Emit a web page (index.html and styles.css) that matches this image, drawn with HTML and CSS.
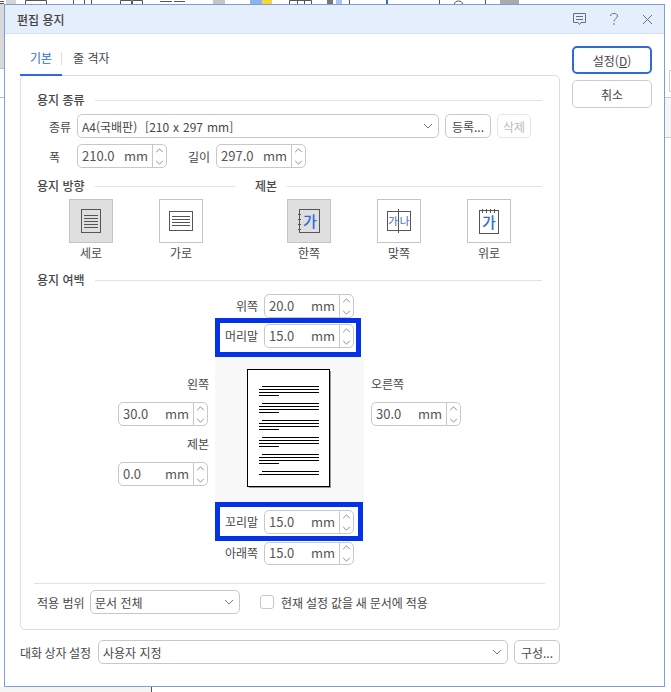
FILE: index.html
```html
<!DOCTYPE html>
<html lang="ko">
<head>
	<meta charset="utf-8"/>
	<title>편집 용지</title>
	<link rel="stylesheet" href="styles.css">
</head>
<body>
<div id="desktop">
	<svg class="backdrop" width="671" height="692" viewBox="0 0 671 692">
		<rect x="0" y="0" width="671" height="692" fill="#fff"/>
		<rect x="0" y="687" width="151" height="5" fill="#f5f5f5"/>
		<rect x="6" y="0" width="10" height="4" fill="#d4d4d4"/>
		<path d="M0 1.500H4M0 3.500H4" stroke="#555"/>
		<g fill="none" stroke="#555">
			<path d="M25.500 4V0.500H46.500V4"/>
			<path d="M73.500 4V0M84.500 4V0M91.500 4V0"/>
			<path d="M120.500 4V0.500H131.500V4M132.500 4V0.500H142.500V4"/>
			<path d="M160 1.500H172M174 1.500H185"/>
			<path d="M289.500 4V0.500H311.500V4M297.500 4V0M304.500 4V0"/>
			<path d="M349.500 4V0M439.500 4V0M485.500 4V0"/>
			<path d="M454.500 4C454.500 0 462.500 0 462.500 4"/>
		</g>
		<rect x="213" y="0" width="12" height="4" fill="#c5c5c5"/>
		<rect x="250" y="0" width="12" height="4" fill="#8db4ea"/>
		<rect x="262" y="0" width="10" height="4" fill="#f2d840"/>
		<rect x="327" y="0" width="6" height="4" fill="#777"/>
		<rect x="336" y="0" width="6" height="4" fill="#a9c4ee"/>
		<rect x="386" y="0" width="2" height="4" fill="#2f6bd8"/>
		<rect x="500" y="0" width="19" height="4" fill="#aaa"/>
		<rect x="0" y="4" width="4" height="64" fill="#d9d9d9"/>
		<path d="M0 68.500H4M0 97.500H4" stroke="#bbb"/>
		<path d="M151.500 687V692" stroke="#555"/>
		<rect x="665" y="97" width="6" height="40" fill="#f6f6f6"/>
		<path d="M665 97.500H671M665 137.500H671" stroke="#ccc"/>
		<path d="M671 70.500H669.500V91.500H671" fill="none" stroke="#ccc"/>
	</svg>

	<div class="dialog">
		<div class="titlebar">
			<span class="title">편집 용지</span>
			<div class="title-icons">
				<svg width="13" height="12" viewBox="0 0 13 12"><path d="M0.500 0.500H12.500V9.500H8L6.500 11.500L5 9.500H0.500Z M3 3.500H10M3 6.500H10" fill="none" stroke="#66707c"/></svg>
				<svg class="icon-help" width="8" height="12" viewBox="0 0 8 12"><path d="M0.500 3C0.500 -0.500 7.500 -0.500 7.500 3C7.500 5.500 4 5.500 4 8.500M4 10V12" fill="none" stroke="#66707c"/></svg>
				<svg width="9" height="9" viewBox="0 0 9 9"><path d="M0 0L9 9M9 0L0 9" fill="none" stroke="#66707c"/></svg>
			</div>
		</div>

		<div class="dialog-main">
			<div class="main-left">
				<div class="tabs">
					<span class="tab tab-on">기본</span>
					<span class="tab">줄 격자</span>
				</div>
				<div class="panel">
					<div class="head"><span>용지 종류</span><i></i></div>
					<div class="row row-kind">
						<label class="lbl-kind">종류</label>
						<div class="select select-kind"><span>A4(국배판)&nbsp; [210 x 297 mm]</span><svg class="chev" width="10" height="6" viewBox="0 0 10 6"><path d="M1 1L5 5L9 1"/></svg></div>
						<span class="btn btn-reg">등록...</span>
						<span class="btn btn-del">삭제</span>
					</div>
					<div class="row row-size">
						<label class="lbl-kind">폭</label>
						<div class="spin"><b>210.0</b><em>mm</em><div class="arrows"><svg viewBox="0 0 10 6"><path d="M1 5L5 1L9 5"/></svg><svg viewBox="0 0 10 6"><path d="M1 1L5 5L9 1"/></svg></div></div>
						<label class="lbl-len">길이</label>
						<div class="spin"><b>297.0</b><em>mm</em><div class="arrows"><svg viewBox="0 0 10 6"><path d="M1 5L5 1L9 5"/></svg><svg viewBox="0 0 10 6"><path d="M1 1L5 5L9 1"/></svg></div></div>
					</div>

					<div class="head-pair">
						<div class="head head-dir"><span>용지 방향</span><i></i></div>
						<div class="head head-bind"><span>제본</span><i></i></div>
					</div>
					<div class="tiles">
						<div class="tile tile-on">
							<div class="box"><svg width="20" height="24" viewBox="0 0 20 24"><rect x="0.500" y="0.500" width="19" height="23" fill="none" stroke="#555"/><path d="M3 6.500H17M3 9.500H17M3 12.500H17M3 15.500H17M3 18.500H17" stroke="#555"/></svg></div>
							<span>세로</span>
						</div>
						<div class="tile tile-2">
							<div class="box"><svg width="24" height="20" viewBox="0 0 24 20"><rect x="0.500" y="0.500" width="23" height="19" fill="none" stroke="#555"/><path d="M3 5.500H21M3 8.500H21M3 11.500H21M3 14.500H21" stroke="#555"/></svg></div>
							<span>가로</span>
						</div>
						<div class="tile tile-3 tile-on">
							<div class="box"><svg width="22" height="24" viewBox="0 0 22 24"><rect x="1.500" y="0.500" width="20" height="23" fill="none" stroke="#555"/><path d="M0 5.500H3M0 10.500H3M0 15.500H3M0 20.500H3" stroke="#555"/><text x="12" y="18" text-anchor="middle" class="ga">가</text></svg></div>
							<span>한쪽</span>
						</div>
						<div class="tile tile-4">
							<div class="box"><svg width="24" height="24" viewBox="0 0 24 24"><rect x="0.500" y="2.500" width="23" height="19" fill="#fff" stroke="#555"/><path d="M11.500 0V24" stroke="#555"/><text x="6" y="16" text-anchor="middle" class="ga-small">가</text><text x="17.500" y="16" text-anchor="middle" class="ga-small">나</text></svg></div>
							<span>맞쪽</span>
						</div>
						<div class="tile tile-4">
							<div class="box"><svg width="20" height="25" viewBox="0 0 20 25"><rect x="0.500" y="1.500" width="19" height="23" fill="#fff" stroke="#555"/><path d="M3.500 0V4M7.500 0V4M11.500 0V4M15.500 0V4" stroke="#555"/><text x="10" y="19" text-anchor="middle" class="ga">가</text></svg></div>
							<span>위로</span>
						</div>
					</div>

					<div class="head head-margin"><span>용지 여백</span><i></i></div>
					<div class="margins">
						<div class="side side-left">
							<label>왼쪽</label>
							<div class="spin"><b>30.0</b><em>mm</em><div class="arrows"><svg viewBox="0 0 10 6"><path d="M1 5L5 1L9 5"/></svg><svg viewBox="0 0 10 6"><path d="M1 1L5 5L9 1"/></svg></div></div>
							<label class="lbl-bind">제본</label>
							<div class="spin"><b>0.0</b><em>mm</em><div class="arrows"><svg viewBox="0 0 10 6"><path d="M1 5L5 1L9 5"/></svg><svg viewBox="0 0 10 6"><path d="M1 1L5 5L9 1"/></svg></div></div>
						</div>
						<div class="center">
							<div class="mrow">
								<label>위쪽</label>
								<div class="spin"><b>20.0</b><em>mm</em><div class="arrows"><svg viewBox="0 0 10 6"><path d="M1 5L5 1L9 5"/></svg><svg viewBox="0 0 10 6"><path d="M1 1L5 5L9 1"/></svg></div></div>
							</div>
							<div class="mrow hl hl-top">
								<label>머리말</label>
								<div class="spin"><b>15.0</b><em>mm</em><div class="arrows"><svg viewBox="0 0 10 6"><path d="M1 5L5 1L9 5"/></svg><svg viewBox="0 0 10 6"><path d="M1 1L5 5L9 1"/></svg></div></div>
							</div>
							<div class="preview">
								<svg class="paper" width="84" height="119" viewBox="0 0 84 119">
									<rect x="2" y="2" width="82" height="117" fill="#999"/>
									<rect x="0.500" y="0.500" width="82" height="117" fill="#fff" stroke="#000"/>
									<path d="M15 17.500H72M12 20.500H72M12 23.500H72M12 26.500H32 M15 34.500H72M12 37.500H72M12 40.500H72M12 43.500H32 M15 51.500H72M12 54.500H72M12 57.500H72M12 60.500H32 M15 68.500H72M12 71.500H72M12 74.500H72M12 77.500H32 M15 85.500H72M12 88.500H72M12 91.500H72M12 94.500H32 M15 102.500H72M12 105.500H72" stroke="#000"/>
								</svg>
							</div>
							<div class="mrow hl hl-bottom">
								<label>꼬리말</label>
								<div class="spin"><b>15.0</b><em>mm</em><div class="arrows"><svg viewBox="0 0 10 6"><path d="M1 5L5 1L9 5"/></svg><svg viewBox="0 0 10 6"><path d="M1 1L5 5L9 1"/></svg></div></div>
							</div>
							<div class="mrow">
								<label>아래쪽</label>
								<div class="spin"><b>15.0</b><em>mm</em><div class="arrows"><svg viewBox="0 0 10 6"><path d="M1 5L5 1L9 5"/></svg><svg viewBox="0 0 10 6"><path d="M1 1L5 5L9 1"/></svg></div></div>
							</div>
						</div>
						<div class="side side-right">
							<label>오른쪽</label>
							<div class="spin"><b>30.0</b><em>mm</em><div class="arrows"><svg viewBox="0 0 10 6"><path d="M1 5L5 1L9 5"/></svg><svg viewBox="0 0 10 6"><path d="M1 1L5 5L9 1"/></svg></div></div>
						</div>
					</div>

					<div class="apply">
						<label>적용 범위</label>
						<div class="select select-apply"><span>문서 전체</span><svg class="chev" width="10" height="6" viewBox="0 0 10 6"><path d="M1 1L5 5L9 1"/></svg></div>
						<span class="check"></span>
						<span class="check-text">현재 설정 값을 새 문서에 적용</span>
					</div>
				</div>
				<div class="foot">
					<label>대화 상자 설정</label>
					<div class="select select-foot"><span>사용자 지정</span><svg class="chev" width="10" height="6" viewBox="0 0 10 6"><path d="M1 1L5 5L9 1"/></svg></div>
					<span class="btn btn-make">구성...</span>
				</div>
			</div>
			<div class="main-right">
				<span class="side-btn side-btn-on">설정(<u>D</u>)</span>
				<span class="side-btn">취소</span>
			</div>
		</div>
	</div>
</div>
</body>
</html>
```

FILE: styles.css
```css
*{
	margin:0;
	padding:0;
	box-sizing:border-box;
}
body{
	background:#fff;
	font-family:"Noto Sans CJK KR","Noto Sans",sans-serif;
	font-size:12px;
	color:#484848;
}
#desktop{
	position:relative;
	width:671px;
	height:692px;
	overflow:hidden;
}
.backdrop{
	position:absolute;
	left:0;
	top:0;
}
.dialog{
	position:absolute;
	left:4px;
	top:4px;
	width:661px;
	height:683px;
	background:#fff;
	border:1px solid #7e9fd6;
}
.titlebar{
	display:flex;
	align-items:center;
	justify-content:space-between;
	height:29px;
	padding:0 12px 0 12px;
	background:#e4eefd;
	border-bottom:1px solid #d5e0f2;
}
.title{
	font-weight:500;
	color:#444;
}
.title-icons{
	display:flex;
	gap:24px;
	align-items:center;
}
.icon-help{
	margin-right:1px;
}
.dialog-main{
	display:flex;
	padding:12px 12px 0 15px;
}
.main-left{
	width:540px;
}
.main-right{
	display:flex;
	flex-direction:column;
	gap:6px;
	margin:0 0 0 12px;
}
.side-btn{
	display:flex;
	align-items:center;
	justify-content:center;
	width:80px;
	height:28px;
	border:1px solid #ccc;
	border-radius:5px;
}
.side-btn-on{
	border:2px solid #2f6bd8;
}
.tabs{
	display:flex;
	height:30px;
	align-items:flex-start;
}
.tab{
	position:relative;
	height:30px;
	padding:4px 10px 0 11px;
	line-height:16px;
	white-space:nowrap;
}
.tab-on{
	width:42px;
	padding:4px 0 0 10px;
	color:#2f6bd8;
	border-bottom:2px solid #2f6bd8;
}
.tab-on::after{
	content:"";
	position:absolute;
	right:0;
	top:6px;
	height:13px;
	border-right:1px solid #ddd;
}
.panel{
	height:555px;
	padding:15px 17px 0 16px;
	margin-top:-1px;
	border:1px solid #ddd;
	border-radius:5px;
}
.head{
	display:flex;
	align-items:center;
	gap:10px;
	height:18px;
	line-height:18px;
}
.head span{
	font-weight:500;
	white-space:nowrap;
}
.head i{
	flex:1;
	border-top:1px solid #e2e2e2;
}
.row{
	display:flex;
	align-items:center;
	height:24px;
}
.row-kind{
	margin-top:5px;
}
.row-size{
	margin-top:6px;
}
.lbl-kind{
	width:40px;
	padding-left:12px;
}
.lbl-len{
	width:49px;
	padding-left:21px;
}
.select{
	display:flex;
	align-items:center;
	justify-content:space-between;
	height:24px;
	padding:0 5px 0 4px;
	border:1px solid #c8c8c8;
	border-radius:5px;
}
.select-kind{
	width:362px;
	word-spacing:0.6px;
}
.chev{
	fill:none;
	stroke:#777;
}
.btn{
	display:flex;
	align-items:center;
	justify-content:center;
	height:24px;
	border:1px solid #c8c8c8;
	border-radius:5px;
}
.btn-reg{
	width:46px;
	margin-left:6px;
}
.btn-del{
	width:34px;
	margin-left:6px;
	color:#bbb;
	border-color:#e6e6e6;
}
.spin{
	display:flex;
	align-items:center;
	position:relative;
	width:90px;
	height:24px;
	padding-left:4px;
	border:1px solid #c8c8c8;
	border-radius:5px;
	background:#fff;
	color:#555;
}
.spin b{
	flex:1;
	font-weight:400;
	font-size:13px;
	padding-bottom:1px;
}
.spin em{
	font-style:normal;
	font-size:13px;
	margin-right:4px;
	padding-bottom:1px;
}
.arrows{
	display:flex;
	flex-direction:column;
	align-items:center;
	justify-content:center;
	gap:7px;
	width:14px;
	height:100%;
	border-left:1px solid #c8c8c8;
}
.arrows svg{
	width:9px;
	height:5px;
	fill:none;
	stroke:#777;
}
.head-pair{
	display:flex;
	margin-top:9px;
}
.head-dir{
	width:198px;
	margin-right:20px;
}
.head-bind{
	flex:1;
}
.tiles{
	display:flex;
	margin-top:4px;
}
.tile{
	display:flex;
	flex-direction:column;
	align-items:center;
	width:44px;
	margin-left:46px;
}
.tile:first-child{
	margin-left:32px;
}
.tile-3{
	margin-left:84px;
}
.tile .box{
	display:flex;
	align-items:center;
	justify-content:center;
	width:44px;
	height:44px;
	border:1px solid #c4c4c4;
	background:#fff;
}
.tile-on .box{
	background:#dfdfdf;
}
.tile span{
	margin-top:1px;
	line-height:18px;
}
.ga{
	font-size:15px;
	font-weight:500;
	fill:#2f6bd8;
}
.ga-small{
	font-size:10.500px;
	fill:#2f6bd8;
}
.head-margin{
	margin-top:9px;
}
.margins{
	display:flex;
	height:271px;
	margin-top:5px;
}
.side{
	display:flex;
	flex-direction:column;
}
.side label{
	height:18px;
	line-height:18px;
}
.side-left{
	width:171px;
	padding:81px 0 0 81px;
	align-items:flex-end;
}
.side-left label{
	margin-right:-1px;
}
.side-left .spin{
	margin-top:9px;
}
.side-left .lbl-bind{
	margin-top:9px;
}
.side-right{
	padding:81px 0 0 7px;
}
.side-right .spin{
	margin-top:9px;
}
.center{
	width:149px;
	margin-left:7px;
	display:flex;
	flex-direction:column;
}
.mrow{
	display:flex;
	align-items:center;
	justify-content:flex-end;
	gap:6px;
	flex:none;
	height:24px;
	padding-right:10px;
}
.mrow label{
	line-height:24px;
}
.mrow:last-child .spin{
	height:23px;
}
.hl{
	border:5px solid #0432e6;
	align-items:flex-start;
	background:#fff;
}
.hl-top{
	width:146px;
	height:39px;
	padding:1px 2px 0 0;
}
.hl-bottom{
	width:148px;
	height:39px;
	padding:3px 4px 0 0;
}
.preview{
	display:flex;
	justify-content:center;
	flex:none;
	height:145px;
	padding:12px 1px 0 0;
	background:#f8f8f8;
}
.apply{
	display:flex;
	align-items:center;
	margin:18px -3px 0 -3px;
	padding-top:6px;
	height:31px;
	border-top:1px solid #e2e2e2;
}
.apply label{
	margin-left:3px;
	width:53px;
}
.select-apply{
	width:150px;
}
.check{
	width:14px;
	height:14px;
	margin-left:20px;
	border:1px solid #c8c8c8;
	border-radius:3px;
}
.check-text{
	margin-left:7px;
	word-spacing:-0.500px;
}
.foot{
	display:flex;
	align-items:center;
	margin-top:10px;
}
.foot label{
	width:78px;
	white-space:nowrap;
	word-spacing:-1px;
}
.select-foot{
	width:410px;
}
.btn-make{
	width:46px;
	margin-left:6px;
}
```
